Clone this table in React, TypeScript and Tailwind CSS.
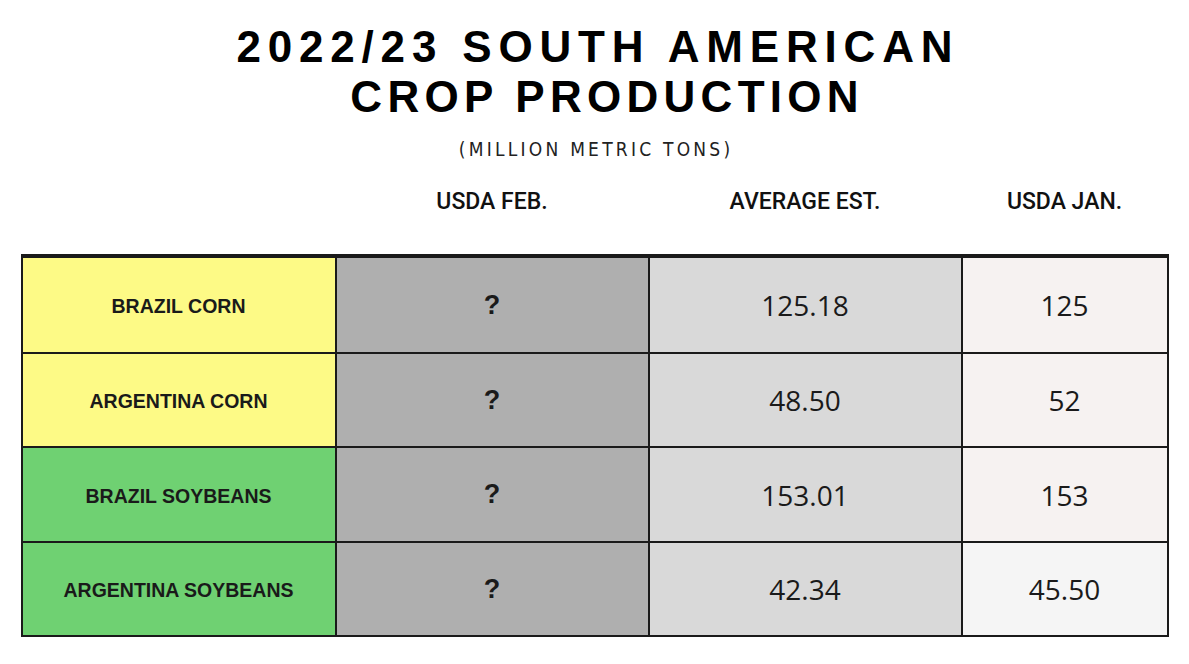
import React from "react";

const rows = [
  { label: "BRAZIL CORN", bg: "bg-[#fdfa86]", avg: "125.18", jan: "125", janBg: "bg-[#f6f2f1]", h: "h-[94px]" },
  { label: "ARGENTINA CORN", bg: "bg-[#fdfa86]", avg: "48.50", jan: "52", janBg: "bg-[#f6f2f1]", h: "h-[92px]" },
  { label: "BRAZIL SOYBEANS", bg: "bg-[#6fd172]", avg: "153.01", jan: "153", janBg: "bg-[#f6f2f1]", h: "h-[93px]" },
  { label: "ARGENTINA SOYBEANS", bg: "bg-[#6fd172]", avg: "42.34", jan: "45.50", janBg: "bg-[#f5f5f5]", h: "h-[92px]" },
];

export default function App() {
  return (
    <div className="w-[1189px] h-[664px] bg-white overflow-hidden flex flex-col items-center" style={{ fontFamily: "'Liberation Sans', Arial, sans-serif" }}>
      <div className="mt-[22px] flex flex-col items-center text-black font-bold text-[44px] leading-[50px]" style={{ fontFamily: "'Liberation Sans', Arial, sans-serif" }}>
        <div className="tracking-[0.155em] pl-[0.155em]">2022/23 SOUTH AMERICAN</div>
        <div className="tracking-[0.12em] pl-[0.12em] ml-[20px]">CROP PRODUCTION</div>
      </div>
      <div className="mt-[16px] text-[19px] leading-[22px] tracking-[0.17em] pl-[0.17em] text-[#222]" style={{ fontFamily: "'DejaVu Sans Condensed', 'Liberation Sans Narrow', sans-serif", fontWeight: 200 }}>
        (MILLION METRIC TONS)
      </div>
      <div className="w-[1148px] mt-[29px] grid grid-cols-[312px_311px_311px_204px] gap-x-[2px] px-[2px] text-[23px] leading-[26px] text-[#111]" style={{ fontFamily: "Roboto, 'Liberation Sans', sans-serif", fontWeight: 500 }}>
        <div />
        <div className="text-center">USDA FEB.</div>
        <div className="text-center">AVERAGE EST.</div>
        <div className="text-center">USDA JAN.</div>
      </div>
      <div className="w-[1148px] mt-[39px] bg-[#1a1a1a] pt-[4px] pb-[2px] px-[2px] flex flex-col gap-[2px]">
        {rows.map((r) => (
          <div key={r.label} className={`grid grid-cols-[312px_311px_311px_204px] gap-x-[2px] ${r.h}`}>
            <div className={`${r.bg} flex items-center justify-center pt-[4px] text-[19.5px] font-bold text-[#1a1a1a]`}>{r.label}</div>
            <div className="bg-[#afafaf] flex items-center justify-center text-[27px] font-bold text-[#1a1a1a]">?</div>
            <div className="bg-[#d9d9d9] flex items-center justify-center text-[28px] text-[#1a1a1a]" style={{ fontFamily: "'Open Sans', sans-serif" }}>{r.avg}</div>
            <div className={`${r.janBg} flex items-center justify-center text-[28px] text-[#1a1a1a]`} style={{ fontFamily: "'Open Sans', sans-serif" }}>{r.jan}</div>
          </div>
        ))}
      </div>
    </div>
  );
}
